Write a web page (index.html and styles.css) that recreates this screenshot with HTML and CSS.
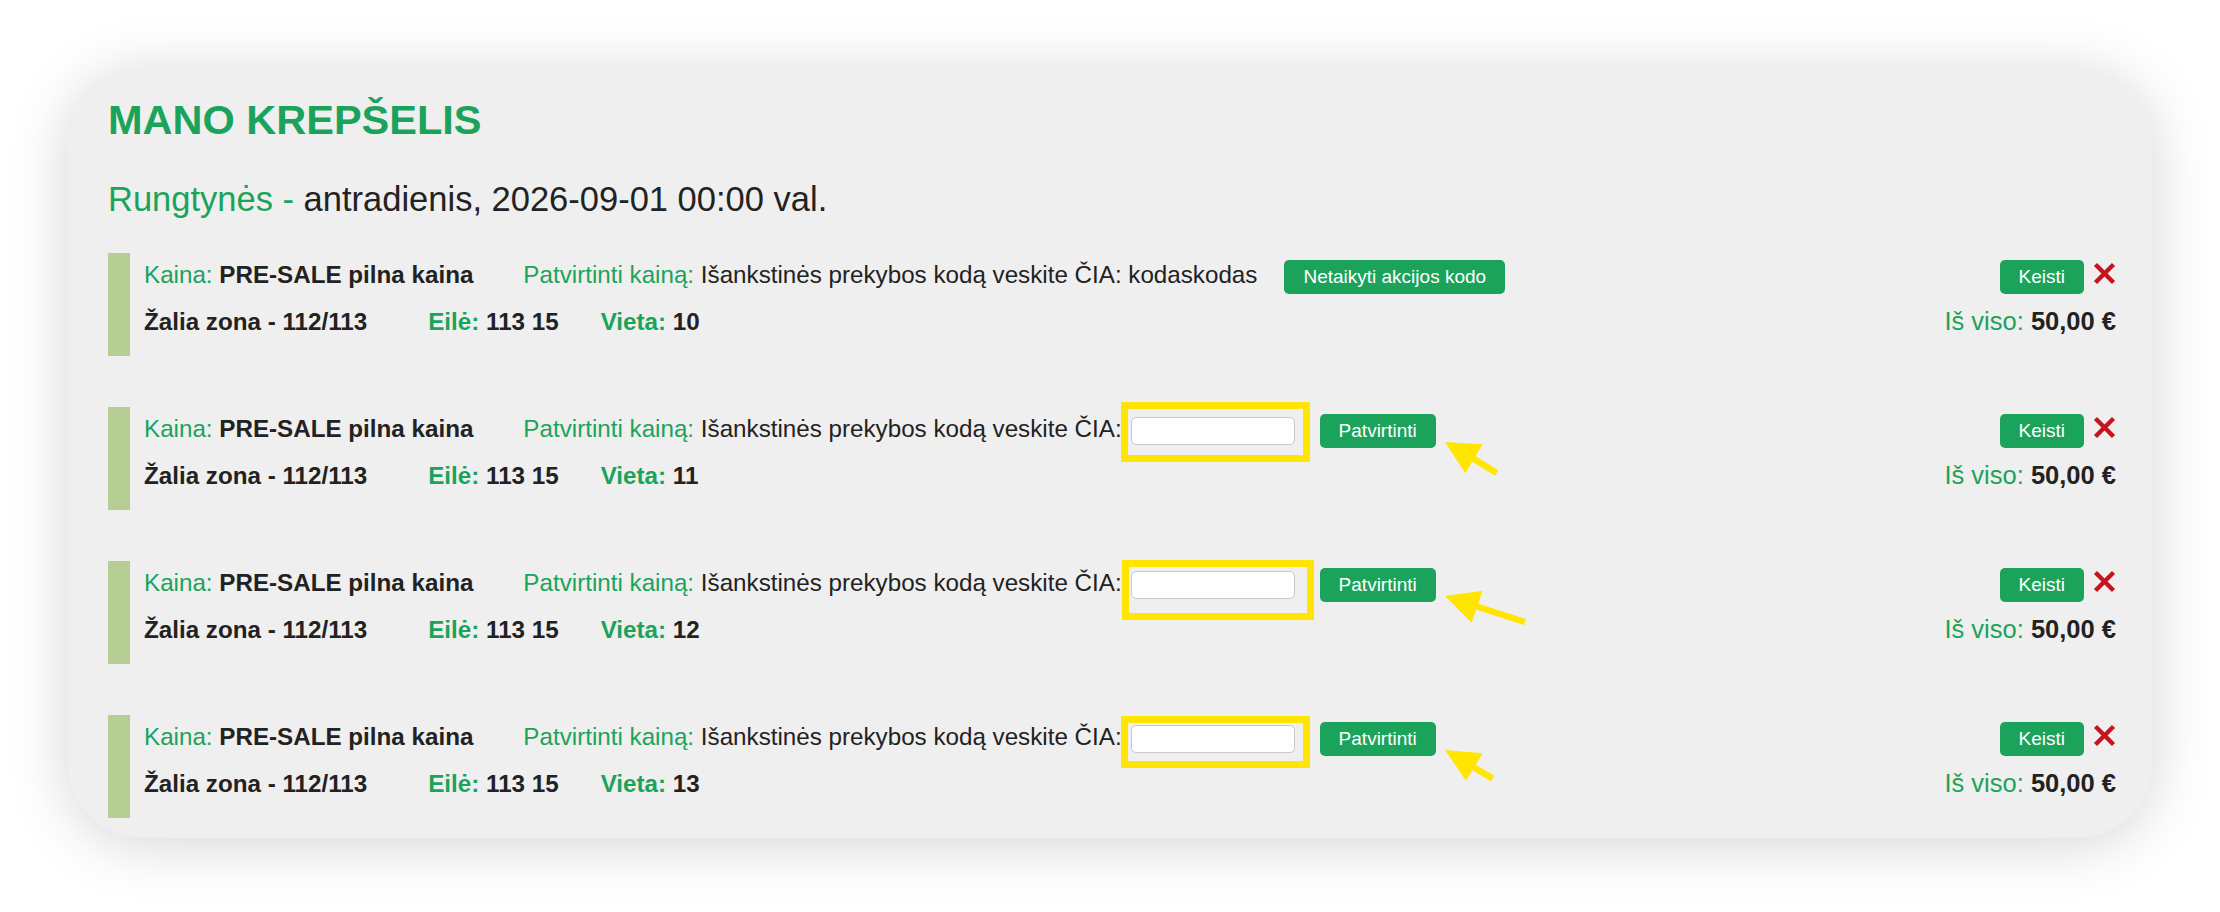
FILE: index.html
```html
<!DOCTYPE html>
<html lang="lt">
<head>
<meta charset="utf-8">
<title>Mano krepšelis</title>
<link rel="stylesheet" href="styles.css">
</head>
<body>
<div class="card">
  <h1 class="title">MANO KREPŠELIS</h1>
  <h2 class="event"><span class="lbl">Rungtynės -</span> antradienis, 2026-09-01 00:00 val.</h2>

  <div class="rows">
    <div class="ticket">
      <div class="line1">
        <span class="price"><span class="lbl">Kaina:</span> <b>PRE-SALE pilna kaina</b></span>
        <span class="code-text"><span class="lbl">Patvirtinti kainą:</span> Išankstinės prekybos kodą veskite ČIA: kodaskodas</span>
        <button class="btn btn-wide" type="button">Netaikyti akcijos kodo</button>
      </div>
      <div class="actions">
        <button class="btn" type="button">Keisti</button>
        <svg class="remove" viewBox="0 0 23 23" width="23" height="23"><path d="M2.5 2.5 L20.5 20.5 M20.5 2.5 L2.5 20.5" stroke="#c5141e" stroke-width="4.4" fill="none"/></svg>
      </div>
      <div class="line2">
        <b class="zone">Žalia zona - 112/113</b>
        <b class="rowno"><span class="lbl">Eilė:</span> 113 15</b>
        <b><span class="lbl">Vieta:</span> 10</b>
      </div>
      <div class="total"><span class="lbl">Iš viso:</span> <b>50,00 €</b></div>
    </div>

    <div class="ticket">
      <div class="line1">
        <span class="price"><span class="lbl">Kaina:</span> <b>PRE-SALE pilna kaina</b></span>
        <span class="code-text"><span class="lbl">Patvirtinti kainą:</span> Išankstinės prekybos kodą veskite ČIA:</span>
        <span class="field hl-a"><input class="code-input" type="text"></span>
        <span class="confirm">
          <button class="btn" type="button">Patvirtinti</button>
          <svg class="arrow" viewBox="-4 -10 90 50" width="90" height="50"><polygon points="0,0 37.6,2.3 20.3,31.3" fill="#ffe500"/><line x1="24" y1="14" x2="51.7" y2="31" stroke="#ffe500" stroke-width="6.5"/></svg>
        </span>
      </div>
      <div class="actions">
        <button class="btn" type="button">Keisti</button>
        <svg class="remove" viewBox="0 0 23 23" width="23" height="23"><path d="M2.5 2.5 L20.5 20.5 M20.5 2.5 L2.5 20.5" stroke="#c5141e" stroke-width="4.4" fill="none"/></svg>
      </div>
      <div class="line2">
        <b class="zone">Žalia zona - 112/113</b>
        <b class="rowno"><span class="lbl">Eilė:</span> 113 15</b>
        <b><span class="lbl">Vieta:</span> 11</b>
      </div>
      <div class="total"><span class="lbl">Iš viso:</span> <b>50,00 €</b></div>
    </div>

    <div class="ticket">
      <div class="line1">
        <span class="price"><span class="lbl">Kaina:</span> <b>PRE-SALE pilna kaina</b></span>
        <span class="code-text"><span class="lbl">Patvirtinti kainą:</span> Išankstinės prekybos kodą veskite ČIA:</span>
        <span class="field hl-b"><input class="code-input" type="text"></span>
        <span class="confirm">
          <button class="btn" type="button">Patvirtinti</button>
          <svg class="arrow" viewBox="-4 -10 90 50" width="90" height="50"><polygon points="0,0 37.6,-5.3 26.6,26.7" fill="#ffe500"/><line x1="27" y1="9" x2="80" y2="26" stroke="#ffe500" stroke-width="6.5"/></svg>
        </span>
      </div>
      <div class="actions">
        <button class="btn" type="button">Keisti</button>
        <svg class="remove" viewBox="0 0 23 23" width="23" height="23"><path d="M2.5 2.5 L20.5 20.5 M20.5 2.5 L2.5 20.5" stroke="#c5141e" stroke-width="4.4" fill="none"/></svg>
      </div>
      <div class="line2">
        <b class="zone">Žalia zona - 112/113</b>
        <b class="rowno"><span class="lbl">Eilė:</span> 113 15</b>
        <b><span class="lbl">Vieta:</span> 12</b>
      </div>
      <div class="total"><span class="lbl">Iš viso:</span> <b>50,00 €</b></div>
    </div>

    <div class="ticket">
      <div class="line1">
        <span class="price"><span class="lbl">Kaina:</span> <b>PRE-SALE pilna kaina</b></span>
        <span class="code-text"><span class="lbl">Patvirtinti kainą:</span> Išankstinės prekybos kodą veskite ČIA:</span>
        <span class="field hl-c"><input class="code-input" type="text"></span>
        <span class="confirm">
          <button class="btn" type="button">Patvirtinti</button>
          <svg class="arrow" viewBox="-4 -10 90 50" width="90" height="50"><polygon points="0,0 37.6,3.3 21,30.7" fill="#ffe500"/><line x1="25" y1="15" x2="47.5" y2="28.5" stroke="#ffe500" stroke-width="6.5"/></svg>
        </span>
      </div>
      <div class="actions">
        <button class="btn" type="button">Keisti</button>
        <svg class="remove" viewBox="0 0 23 23" width="23" height="23"><path d="M2.5 2.5 L20.5 20.5 M20.5 2.5 L2.5 20.5" stroke="#c5141e" stroke-width="4.4" fill="none"/></svg>
      </div>
      <div class="line2">
        <b class="zone">Žalia zona - 112/113</b>
        <b class="rowno"><span class="lbl">Eilė:</span> 113 15</b>
        <b><span class="lbl">Vieta:</span> 13</b>
      </div>
      <div class="total"><span class="lbl">Iš viso:</span> <b>50,00 €</b></div>
    </div>
  </div>
</div>
</body>
</html>
```
FILE: styles.css
```css
html, body {
  margin: 0;
  padding: 0;
  background: #ffffff;
}

body {
  font-family: "Liberation Sans", Arial, sans-serif;
  color: #222222;
}

.card {
  margin: 68px;
  padding: 28px 36px 20px 40px;
  background: #efefef;
  border-radius: 75px;
  box-shadow: 0 6px 60px rgba(0, 0, 0, 0.17);
}

.title {
  margin: 0;
  font-size: 41.5px;
  line-height: 48px;
  font-weight: bold;
  color: #1ba35b;
}

.event {
  margin: 35px 0 0;
  font-size: 34.5px;
  line-height: 40px;
  font-weight: normal;
  color: #222222;
}

.lbl {
  color: #1ba35b;
}

.rows {
  margin-top: 34px;
  display: flex;
  flex-direction: column;
  gap: 51px;
}

.ticket {
  display: grid;
  grid-template-columns: 1fr auto;
  align-items: baseline;
  align-content: start;
  row-gap: 12px;
  height: 103px;
  box-sizing: border-box;
  border-left: 22px solid #b6cd93;
  padding: 7px 0 0 14px;
  font-size: 24.2px;
  line-height: 30px;
}

.line1,
.line2 {
  display: flex;
  align-items: baseline;
  white-space: nowrap;
}

.price {
  margin-right: 50px;
}

.btn {
  font-family: "Liberation Sans", Arial, sans-serif;
  font-size: 19px;
  line-height: 21px;
  padding: 6px 19px 7px;
  border: none;
  border-radius: 5px;
  background: #1ba35b;
  color: #ffffff;
  cursor: pointer;
}

.btn-wide {
  margin-left: 27px;
}

.field {
  position: relative;
  margin-left: 9px;
  display: inline-flex;
}

.field::after {
  content: "";
  position: absolute;
  border: 7px solid #ffe500;
  pointer-events: none;
}

.hl-a::after {
  left: -10px;
  right: -15px;
  top: -15px;
  bottom: -17px;
}

.hl-b::after {
  left: -9px;
  right: -19px;
  top: -11px;
  bottom: -21px;
}

.hl-c::after {
  left: -10px;
  right: -15px;
  top: -9px;
  bottom: -15px;
}

.code-input {
  width: 164px;
  height: 28px;
  box-sizing: border-box;
  padding: 0 6px;
  border: 1px solid #c9c9c9;
  border-radius: 5px;
  background: #ffffff;
  font-family: "Liberation Sans", Arial, sans-serif;
  font-size: 19px;
}

.confirm {
  position: relative;
  margin-left: 25px;
}

.arrow {
  position: absolute;
  left: calc(100% + 5px);
  top: 18px;
  overflow: visible;
  pointer-events: none;
}

.actions {
  justify-self: end;
  display: flex;
  align-items: flex-start;
}

.remove {
  margin: 2px 0 0 9px;
  display: block;
}

.zone {
  margin-right: 61px;
}

.rowno {
  margin-right: 42px;
}

.total {
  justify-self: end;
  font-size: 25.5px;
  white-space: nowrap;
}
```
